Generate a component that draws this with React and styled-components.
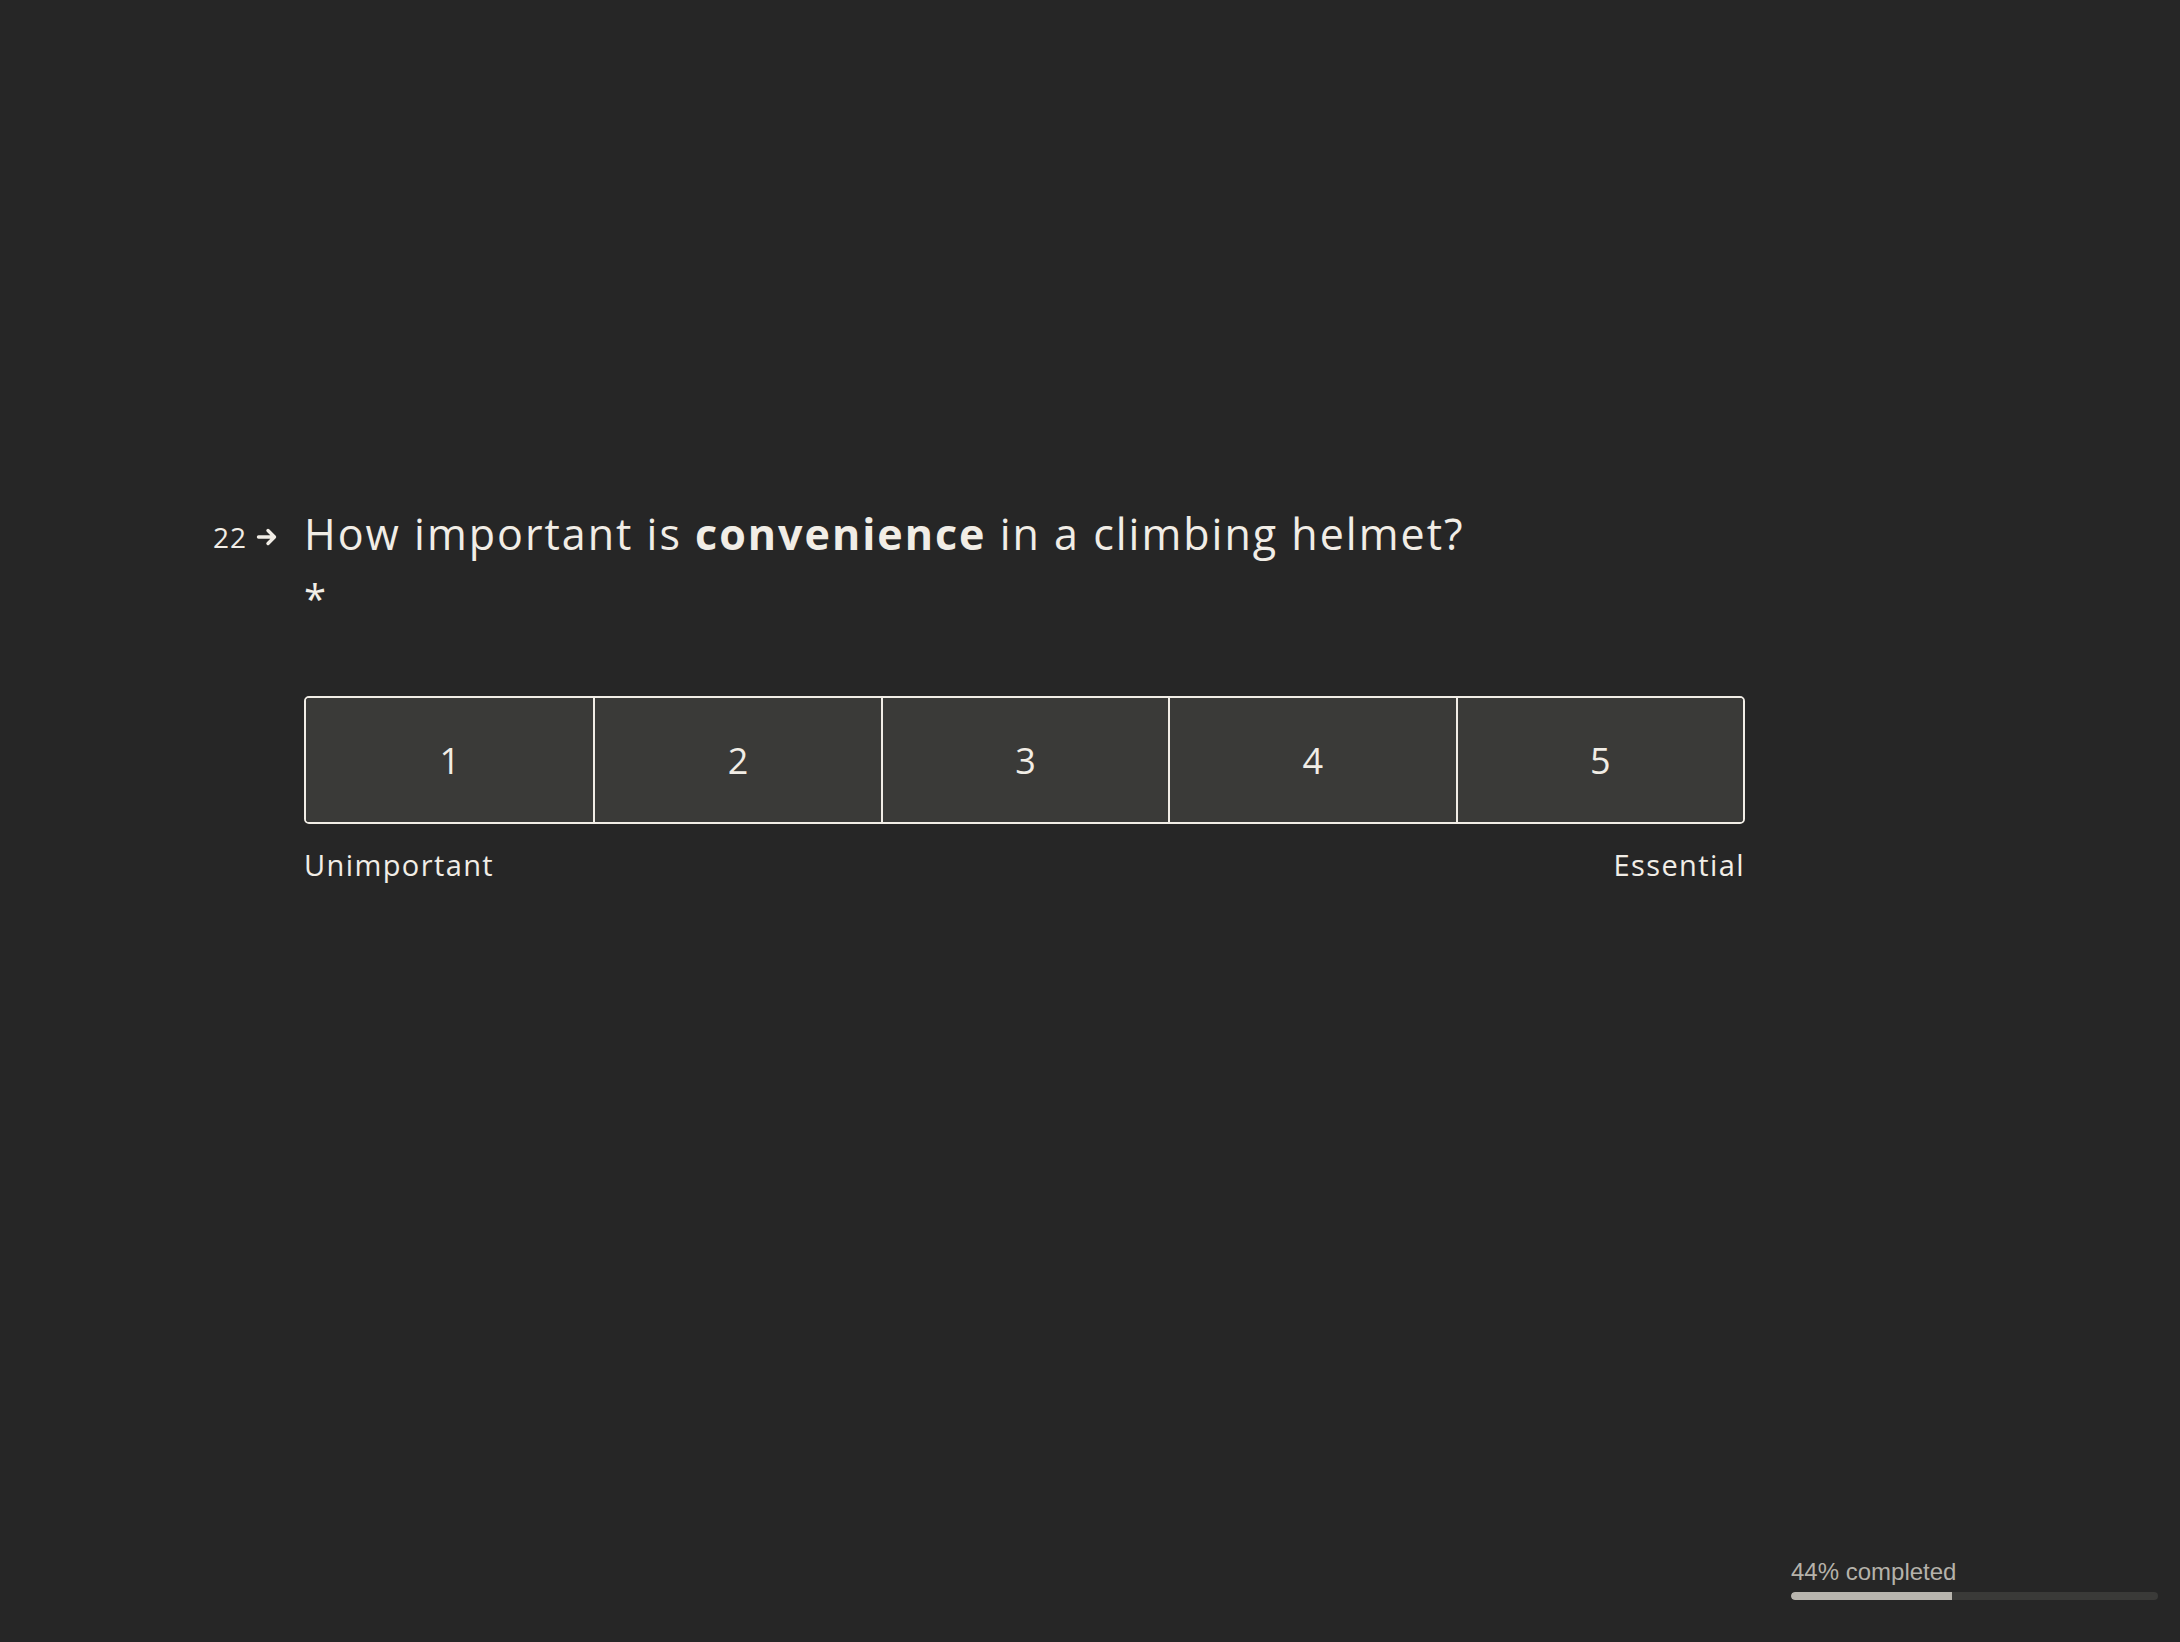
import styled, { createGlobalStyle } from "styled-components";

const GlobalStyle = createGlobalStyle`
  html, body {
    margin: 0;
    padding: 0;
    background: #262626;
  }
  body {
    font-family: "Open Sans", "Noto Sans", sans-serif;
    color: #f1ede6;
  }
`;

const options = [1, 2, 3, 4, 5];
const progress = 44;

const Arrow = () => (
  <svg width="22" height="20" viewBox="0 0 22 20" fill="none">
    <path
      d="M2.5 10h16M12 3.5l6.5 6.5-6.5 6.5"
      stroke="#f1ede6"
      strokeWidth="3.4"
      strokeLinecap="round"
      strokeLinejoin="round"
    />
  </svg>
);

const App = () => {
  return (
    <Page>
      <GlobalStyle />
      <Main>
        <Question>
          <Counter>
            <span>22</span>
            <Arrow />
          </Counter>
          <Content>
            <Title>
              How important is <strong>convenience</strong> in a climbing
              helmet?
            </Title>
            <Required>*</Required>
            <Scale>
              {options.map((n) => (
                <Option key={n}>{n}</Option>
              ))}
            </Scale>
            <Labels>
              <span>Unimportant</span>
              <span>Essential</span>
            </Labels>
          </Content>
        </Question>
      </Main>
      <Footer>
        <Progress>
          <ProgressText>{progress}% completed</ProgressText>
          <Track>
            <Fill style={{ width: `${progress}%` }} />
          </Track>
        </Progress>
      </Footer>
    </Page>
  );
};

const Page = styled.div`
  min-height: 100vh;
  display: flex;
  flex-direction: column;
`;

const Main = styled.main`
  flex: 1;
  padding: 506px 0 0 213px;
`;

const Question = styled.div`
  display: flex;
  align-items: flex-start;
`;

const Counter = styled.div`
  width: 91px;
  display: flex;
  align-items: center;
  gap: 9px;
  font-size: 28px;
  line-height: 1;
  letter-spacing: 1px;
  padding-top: 17px;
  span {
    display: block;
  }
`;

const Content = styled.div`
  width: 1441px;
  display: flex;
  flex-direction: column;
`;

const Title = styled.h1`
  margin: 0;
  font-size: 43px;
  font-weight: 400;
  line-height: 56px;
  letter-spacing: 2px;
  strong {
    font-weight: 700;
  }
`;

const Required = styled.div`
  font-size: 40px;
  line-height: 40px;
  margin-top: 17px;
`;

const Scale = styled.div`
  margin-top: 77px;
  display: grid;
  grid-template-columns: repeat(5, 1fr);
  height: 128px;
  border: 2px solid #f1ede6;
  border-radius: 5px;
  overflow: hidden;
  box-sizing: border-box;
`;

const Option = styled.button`
  display: flex;
  align-items: center;
  justify-content: center;
  background: #3a3a38;
  color: #f1ede6;
  border: 0;
  border-left: 2px solid #f1ede6;
  font-family: inherit;
  font-size: 36px;
  padding: 0;
  cursor: pointer;
  &:first-child {
    border-left: 0;
  }
`;

const Labels = styled.div`
  display: flex;
  justify-content: space-between;
  margin-top: 21px;
  font-size: 29px;
  letter-spacing: 1.4px;
`;

const Footer = styled.footer`
  display: flex;
  justify-content: flex-end;
  padding: 0 22px 42px 0;
`;

const Progress = styled.div`
  width: 367px;
  display: flex;
  flex-direction: column;
  gap: 6px;
`;

const ProgressText = styled.div`
  font-family: "Liberation Sans", Arial, sans-serif;
  font-size: 24px;
  line-height: 28px;
  color: #b5b2aa;
`;

const Track = styled.div`
  height: 8px;
  border-radius: 4px;
  background: #3a3a38;
  overflow: hidden;
`;

const Fill = styled.div`
  height: 100%;
  background: #b8b5ae;
  border-radius: 4px 0 0 4px;
`;

export default App;
